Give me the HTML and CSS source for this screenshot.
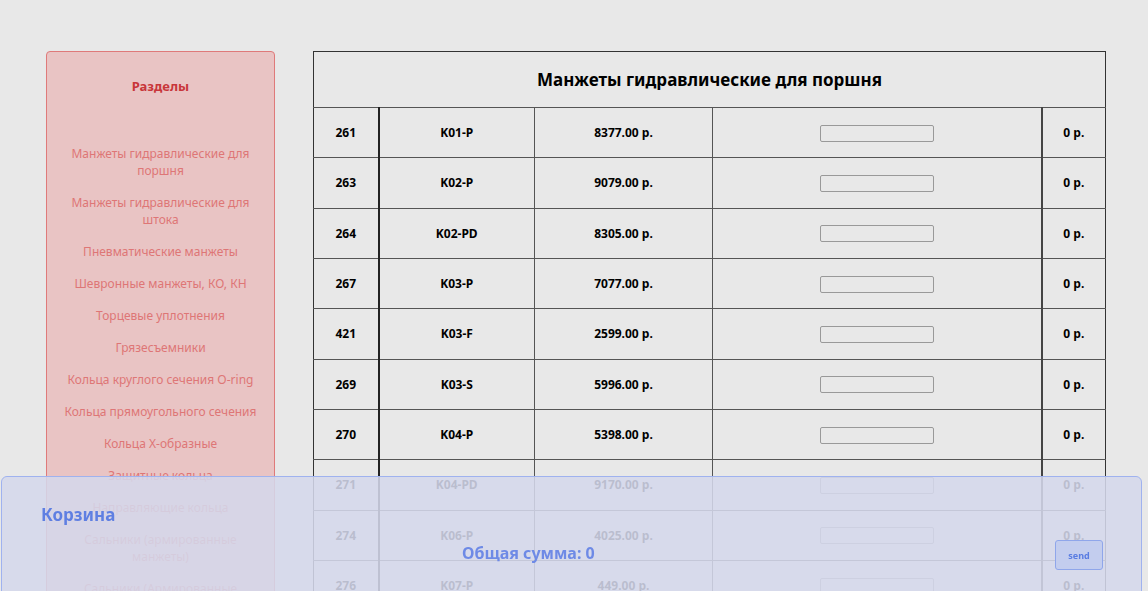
FILE: index.html
```html
<!DOCTYPE html>
<html lang="ru">
<head>
<meta charset="utf-8">
<title>Манжеты</title>
<link rel="stylesheet" href="styles.css">
</head>
<body>
<div class="page">
  <aside class="sidebar">
    <h3 class="sidebar-title">Разделы</h3>
    <ul class="sections">
      <li>Манжеты гидравлические для поршня</li>
      <li>Манжеты гидравлические для штока</li>
      <li>Пневматические манжеты</li>
      <li>Шевронные манжеты, КО, КН</li>
      <li>Торцевые уплотнения</li>
      <li>Грязесъемники</li>
      <li>Кольца круглого сечения O-ring</li>
      <li>Кольца прямоугольного сечения</li>
      <li>Кольца X-образные</li>
      <li>Защитные кольца</li>
      <li>Направляющие кольца</li>
      <li>Сальники (армированные манжеты)</li>
      <li>Сальники (Армированные манжеты) MVQ</li>
    </ul>
  </aside>
  <main class="content">
    <table class="products">
      <colgroup>
        <col class="w-id">
        <col class="w-code">
        <col class="w-price">
        <col class="w-qty">
        <col class="w-sum">
      </colgroup>
      <thead>
        <tr><th colspan="5">Манжеты гидравлические для поршня</th></tr>
      </thead>
      <tbody>
        <tr><td class="c-id">261</td><td class="c-code">K01-P</td><td class="c-price">8377.00 р.</td><td class="c-qty"><input type="text"></td><td class="c-sum">0 р.</td></tr>
        <tr><td class="c-id">263</td><td class="c-code">K02-P</td><td class="c-price">9079.00 р.</td><td class="c-qty"><input type="text"></td><td class="c-sum">0 р.</td></tr>
        <tr><td class="c-id">264</td><td class="c-code">K02-PD</td><td class="c-price">8305.00 р.</td><td class="c-qty"><input type="text"></td><td class="c-sum">0 р.</td></tr>
        <tr><td class="c-id">267</td><td class="c-code">K03-P</td><td class="c-price">7077.00 р.</td><td class="c-qty"><input type="text"></td><td class="c-sum">0 р.</td></tr>
        <tr><td class="c-id">421</td><td class="c-code">K03-F</td><td class="c-price">2599.00 р.</td><td class="c-qty"><input type="text"></td><td class="c-sum">0 р.</td></tr>
        <tr><td class="c-id">269</td><td class="c-code">K03-S</td><td class="c-price">5996.00 р.</td><td class="c-qty"><input type="text"></td><td class="c-sum">0 р.</td></tr>
        <tr><td class="c-id">270</td><td class="c-code">K04-P</td><td class="c-price">5398.00 р.</td><td class="c-qty"><input type="text"></td><td class="c-sum">0 р.</td></tr>
        <tr><td class="c-id">271</td><td class="c-code">K04-PD</td><td class="c-price">9170.00 р.</td><td class="c-qty"><input type="text"></td><td class="c-sum">0 р.</td></tr>
        <tr><td class="c-id">274</td><td class="c-code">K06-P</td><td class="c-price">4025.00 р.</td><td class="c-qty"><input type="text"></td><td class="c-sum">0 р.</td></tr>
        <tr><td class="c-id">276</td><td class="c-code">K07-P</td><td class="c-price">449.00 р.</td><td class="c-qty"><input type="text"></td><td class="c-sum">0 р.</td></tr>
      </tbody>
    </table>
  </main>
</div>
<section class="cart">
  <h2 class="cart-title">Корзина</h2>
  <div class="cart-row">
    <div class="cart-total">Общая сумма: 0</div>
    <button class="send" type="button">send</button>
  </div>
</section>
</body>
</html>
```

FILE: styles.css
```css
html, body {
  margin: 0;
  padding: 0;
  background: #e8e8e8;
  font-family: "Noto Sans", "Open Sans", sans-serif;
}

.page {
  display: flex;
  align-items: flex-start;
  gap: 38px;
  padding: 51px 0 0 46px;
}

.sidebar {
  flex: none;
  width: 229px;
  background: #e9c4c4;
  border: 1px solid #df7a7a;
  border-radius: 4px;
  padding: 24px 10px 20px;
  box-sizing: border-box;
  text-align: center;
}

.sidebar-title {
  margin: 0;
  font-size: 13px;
  line-height: 20px;
  font-weight: 700;
  color: #c8363a;
}

.sections {
  list-style: none;
  margin: 49px 0 0;
  padding: 0;
  display: flex;
  flex-direction: column;
  gap: 15px;
}

.sections li {
  font-size: 12px;
  line-height: 17px;
  color: #de7676;
}

.content {
  flex: none;
}

.products {
  border-collapse: collapse;
  width: 792px;
  border: 1px solid #333;
  table-layout: fixed;
}

.w-id { width: 65px; }
.w-code { width: 156px; }
.w-price { width: 178px; }
.w-qty { width: 329px; }
.w-sum { width: 64px; }

.products th {
  height: 55px;
  font-size: 17px;
  font-weight: 700;
  color: #000;
  text-align: center;
  padding: 0;
  border-bottom: 1px solid #555;
}

.products td {
  height: 49.33px;
  padding: 0;
  text-align: center;
  font-size: 12px;
  font-weight: 700;
  color: #000;
  border-bottom: 1px solid #555;
  border-left: 1px solid #555;
}

.products td.c-id { border-left: none; }
.products td.c-code { border-left: 2px solid #222; }
.products td.c-sum { border-left: 2px solid #444; }

.c-qty input {
  width: 114px;
  height: 17px;
  box-sizing: border-box;
  border: 1px solid #999;
  border-radius: 2px;
  background: #e8e8e8;
  display: block;
  margin: 1px auto 0;
  padding: 0;
}

.cart {
  position: fixed;
  left: 1px;
  right: 6px;
  top: 476px;
  height: 140px;
  background: rgba(212, 215, 234, 0.88);
  border: 1px solid #9fb2ef;
  border-radius: 6px;
  padding: 26px 38px 0 39px;
  box-sizing: border-box;
}

.cart-title {
  margin: 0;
  font-size: 17px;
  line-height: 24px;
  font-weight: 700;
  color: #5f7fe2;
}

.cart-row {
  display: flex;
  align-items: flex-start;
}

.cart-total {
  margin-left: 421px;
  font-size: 16px;
  font-weight: 700;
  color: #6e8ae6;
  line-height: 26px;
  margin-top: 13px;
}

.send {
  margin-left: auto;
  margin-top: 13px;
  width: 48px;
  height: 30px;
  background: #c3cdee;
  border: 1px solid #8fa6ea;
  border-radius: 3px;
  font-family: "Noto Sans", sans-serif;
  font-size: 9px;
  font-weight: 700;
  color: #5a7de2;
  padding: 0;
}
```
